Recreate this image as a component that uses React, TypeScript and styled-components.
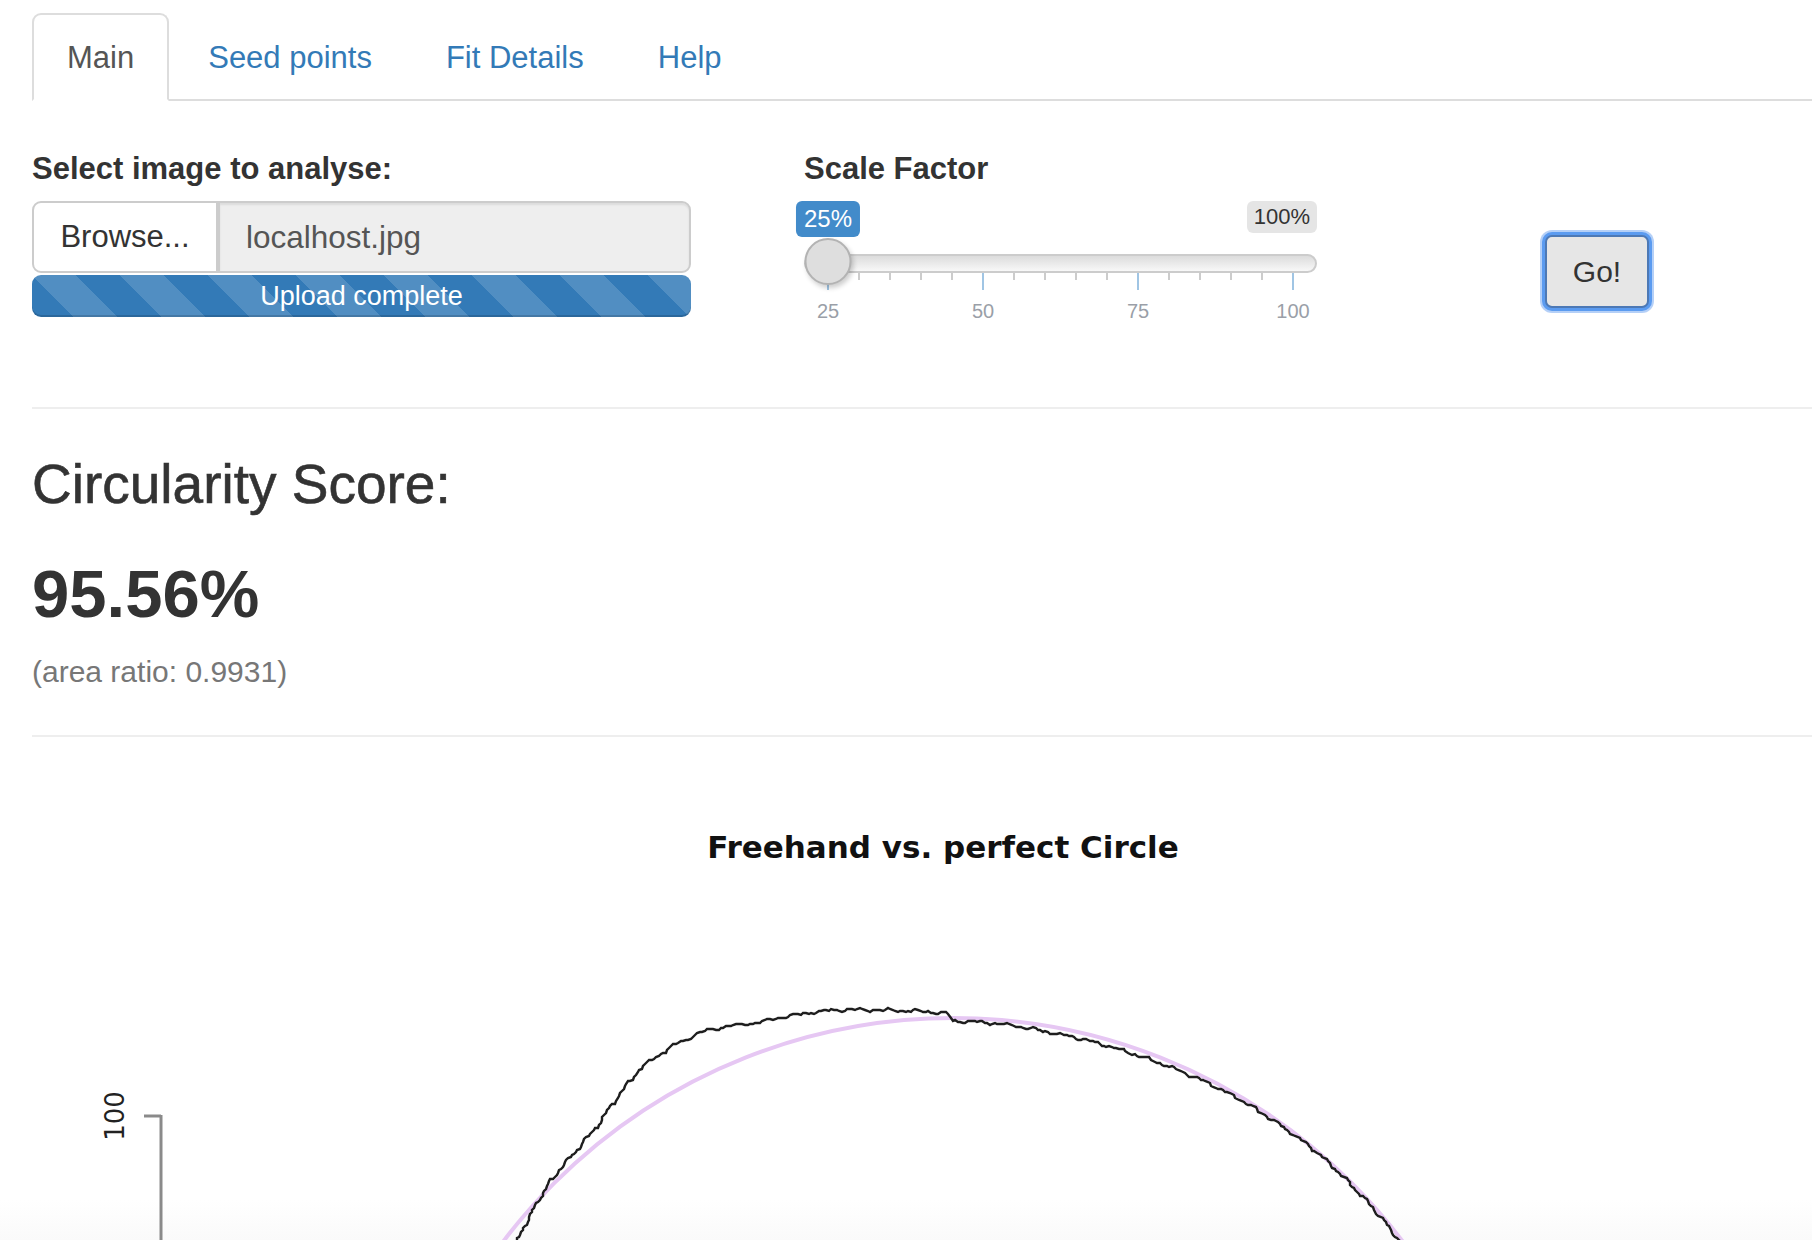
import React from "react";
import styled, { createGlobalStyle } from "styled-components";

const GlobalStyle = createGlobalStyle`
  html, body { margin: 0; padding: 0; background: #fff; }
  body { font-family: "Liberation Sans", Arial, sans-serif; color: #333; overflow: hidden; }
  * { box-sizing: border-box; }
`;

const Page = styled.div`
  width: 1812px;
  height: 1240px;
  overflow: hidden;
  padding: 13px 0 0 32px;
  display: flex;
  flex-direction: column;
`;

const TabList = styled.ul`
  display: flex;
  list-style: none;
  margin: 0;
  padding: 0;
  border-bottom: 2px solid #ddd;
`;

const TabItem = styled.li`
  margin: 0 4px -2px 0;
`;

const TabLink = styled.a<{ $active?: boolean }>`
  display: block;
  padding: 21px 33px 20px;
  font-size: 31px;
  line-height: 43px;
  border: 2px solid ${(p) => (p.$active ? "#ddd" : "transparent")};
  border-bottom-color: ${(p) => (p.$active ? "#fff" : "transparent")};
  border-radius: 9px 9px 0 0;
  background: ${(p) => (p.$active ? "#fff" : "transparent")};
  color: ${(p) => (p.$active ? "#555" : "#337ab7")};
  text-decoration: none;
  cursor: pointer;
`;

const FormRow = styled.div`
  display: flex;
  align-items: flex-start;
  margin-top: 46px;
`;

const Column = styled.div<{ $width?: number; $offset?: number }>`
  width: ${(p) => (p.$width ? `${p.$width}px` : "auto")};
  margin-left: ${(p) => p.$offset ?? 0}px;
  flex: none;
`;

const FieldLabel = styled.label`
  display: block;
  font-weight: 700;
  font-size: 31px;
  line-height: 43px;
  margin-bottom: 11px;
  color: #333;
`;

const InputGroup = styled.div`
  display: flex;
  height: 72px;
`;

const BrowseButton = styled.span`
  width: 186px;
  display: flex;
  align-items: center;
  justify-content: center;
  background: #fff;
  border: 2px solid #ccc;
  border-radius: 9px 0 0 9px;
  font-size: 31px;
  color: #333;
`;

const FileName = styled.div`
  flex: 1;
  display: flex;
  align-items: center;
  padding-left: 26px;
  background: #eee;
  border: 2px solid #ccc;
  border-radius: 0 9px 9px 0;
  box-shadow: inset 0 2px 2px rgba(0, 0, 0, 0.075);
  font-size: 31.5px;
  color: #555;
`;

const Progress = styled.div`
  margin-top: 2px;
  height: 42px;
  border-radius: 9px;
  background-color: #337ab7;
  background-image: linear-gradient(
    45deg,
    rgba(255, 255, 255, 0.15) 25%,
    transparent 25%,
    transparent 50%,
    rgba(255, 255, 255, 0.15) 50%,
    rgba(255, 255, 255, 0.15) 75%,
    transparent 75%,
    transparent
  );
  background-size: 88px 88px;
  box-shadow: inset 0 -2px 0 rgba(0, 0, 0, 0.15);
  color: #fff;
  font-size: 27px;
  line-height: 42px;
  text-align: center;
`;

const SliderBox = styled.div`
  position: relative;
  width: 513px;
  height: 125px;
`;

const SingleBadge = styled.span`
  position: absolute;
  top: 0;
  height: 36px;
  padding: 0 8px;
  line-height: 36px;
  font-size: 24px;
  color: #fff;
  background: #428bca;
  border-radius: 6px;
  transform: translateX(-50%);
  white-space: nowrap;
`;

const MaxBadge = styled.span`
  position: absolute;
  top: 0;
  right: 0;
  height: 32px;
  padding: 0 7px;
  line-height: 32px;
  font-size: 22px;
  color: #333;
  background: rgba(0, 0, 0, 0.1);
  border-radius: 6px;
`;

const Track = styled.div`
  position: absolute;
  left: 0;
  right: 0;
  top: 53px;
  height: 19px;
  border: 2px solid #ccc;
  border-radius: 10px;
  background: linear-gradient(to bottom, #dcdcdc, #f8f8f8);
`;

const Thumb = styled.div`
  position: absolute;
  top: 37px;
  width: 47px;
  height: 47px;
  border: 2px solid #b3b3b3;
  border-radius: 50%;
  background: #dedede;
  box-shadow: 2px 3px 5px rgba(0, 0, 0, 0.2);
  transform: translateX(-50%);
`;

const Tick = styled.span<{ $major?: boolean }>`
  position: absolute;
  top: 72px;
  width: 2px;
  margin-left: -1px;
  height: ${(p) => (p.$major ? 17 : 7)}px;
  background: ${(p) => (p.$major ? "rgba(66, 139, 202, 0.5)" : "#ccc")};
`;

const TickLabel = styled.span`
  position: absolute;
  top: 98px;
  font-size: 20px;
  line-height: 24px;
  color: #9a9fa8;
  transform: translateX(-50%);
`;

const GoButton = styled.button`
  margin-top: 88px;
  width: 104px;
  height: 73px;
  font-family: "Liberation Sans", Arial, sans-serif;
  font-size: 30px;
  color: #333;
  background: #e6e6e6;
  border: 2px solid #4d79b5;
  border-radius: 7px;
  box-shadow: 0 0 0 3px #5b9bf0, 0 0 0 5px rgba(120, 170, 240, 0.55);
  padding: 0;
`;

const Rule = styled.hr<{ $top: number }>`
  height: 0;
  border: 0;
  border-top: 2px solid #eee;
  margin: ${(p) => p.$top}px 0 0;
`;

const ScoreHeading = styled.h3`
  margin: 45px 0 0;
  font-size: 55px;
  line-height: 60px;
  font-weight: 400;
  color: #333;
  -webkit-text-stroke: 0.6px #333;
`;

const ScoreValue = styled.h2`
  margin: 42px 0 0;
  font-size: 67px;
  line-height: 75px;
  font-weight: 700;
  color: #333;
`;

const ScoreNote = styled.p`
  margin: 19px 0 0;
  font-size: 30px;
  line-height: 43px;
  color: #777;
`;

const ChartFrame = styled.div`
  flex: 1;
  margin-left: -32px;
  background: linear-gradient(to bottom, #fff 0, #fff calc(100% - 40px), #fafafa 100%);
`;

const ChartSvg = styled.svg`
  display: block;
  width: 1812px;
  height: 503px;
`;

const ChartTitle = styled.text`
  font-family: "DejaVu Sans", sans-serif;
  font-weight: 700;
  font-size: 31px;
  fill: #111;
`;

const AxisText = styled.text`
  font-family: "DejaVu Sans", sans-serif;
  font-size: 26px;
  fill: #222;
`;

const pos = (v: number) => 24 + ((v - 25) / 75) * 465;

const CX = 953;
const CY = 1582;
const R = 564;

const devTable: [number, number][] = [
  [147, -18], [143, -13], [141.5, -10], [138, -2], [135, 4], [131, 9], [128, 14],
  [124, 28], [121, 38], [117, 41], [114, 40], [109, 28], [105, 24], [101.6, 20],
  [97, 12], [92, 6], [90.6, 5], [90, -3], [85, -4], [80, -6], [70, -6], [60, -3],
  [50, -1], [40, -2], [30, -3],
];

function dev(t: number): number {
  for (let i = 0; i < devTable.length - 1; i++) {
    const [a, da] = devTable[i];
    const [b, db] = devTable[i + 1];
    if (t <= a && t >= b) {
      const f = (a - t) / (a - b);
      return da + (db - da) * f;
    }
  }
  return 0;
}

function noise(t: number): number {
  return 1.0 * Math.sin(t * 2.1) + 0.7 * Math.sin(t * 4.7 + 1) + 0.4 * Math.sin(t * 9.3 + 2);
}

function freehandPath(): string {
  const pts: string[] = [];
  for (let t = 147; t >= 30; t -= 0.25) {
    const r = R + dev(t) + noise(t);
    const rad = (t * Math.PI) / 180;
    const x = Math.round(CX + r * Math.cos(rad));
    const y = Math.round(CY - r * Math.sin(rad));
    pts.push(`${x},${y}`);
  }
  return "M" + pts.join(" L");
}

const tabs = ["Main", "Seed points", "Fit Details", "Help"];
const ticks = Array.from({ length: 16 }, (_, k) => 25 + k * 5);

export default function App() {
  const path = React.useMemo(freehandPath, []);
  return (
    <>
      <GlobalStyle />
      <Page>
        <TabList>
          {tabs.map((t, i) => (
            <TabItem key={t}>
              <TabLink $active={i === 0}>{t}</TabLink>
            </TabItem>
          ))}
        </TabList>

        <FormRow>
          <Column $width={659}>
            <FieldLabel>Select image to analyse:</FieldLabel>
            <InputGroup>
              <BrowseButton>Browse...</BrowseButton>
              <FileName>localhost.jpg</FileName>
            </InputGroup>
            <Progress>Upload complete</Progress>
          </Column>
          <Column $width={513} $offset={113}>
            <FieldLabel>Scale Factor</FieldLabel>
            <SliderBox>
              <Track />
              {ticks.map((v) => (
                <Tick key={v} $major={(v - 25) % 25 === 0} style={{ left: pos(v) }} />
              ))}
              {[25, 50, 75, 100].map((v) => (
                <TickLabel key={v} style={{ left: pos(v) }}>
                  {v}
                </TickLabel>
              ))}
              <Thumb style={{ left: pos(25) }} />
              <SingleBadge style={{ left: pos(25) }}>25%</SingleBadge>
              <MaxBadge>100%</MaxBadge>
            </SliderBox>
          </Column>
          <Column $offset={228}>
            <GoButton>Go!</GoButton>
          </Column>
        </FormRow>

        <Rule $top={81} />
        <ScoreHeading>Circularity Score:</ScoreHeading>
        <ScoreValue>95.56%</ScoreValue>
        <ScoreNote>(area ratio: 0.9931)</ScoreNote>
        <Rule $top={42} />

        <ChartFrame>
          <ChartSvg viewBox="0 737 1812 503">
            <ChartTitle x={943} y={847} textAnchor="middle" dominantBaseline="central">
              Freehand vs. perfect Circle
            </ChartTitle>
            <line x1={144} y1={1116} x2={161} y2={1116} stroke="#8a8a8a" strokeWidth={3} />
            <line x1={161} y1={1115} x2={161} y2={1260} stroke="#8a8a8a" strokeWidth={3} />
            <AxisText
              x={115}
              y={1116}
              textAnchor="middle"
              dominantBaseline="central"
              transform="rotate(-90 115 1116)"
            >
              100
            </AxisText>
            <circle cx={CX} cy={CY} r={R} fill="none" stroke="#e6c7f3" strokeWidth={4} />
            <path d={path} fill="none" stroke="#1e1e1e" strokeWidth={2.4} strokeLinejoin="miter" />
          </ChartSvg>
        </ChartFrame>
      </Page>
    </>
  );
}
